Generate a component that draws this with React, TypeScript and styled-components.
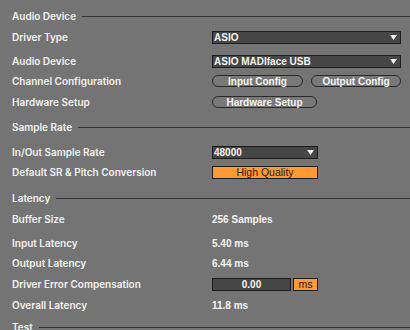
import React from "react";
import styled, { createGlobalStyle } from "styled-components";

const Global = createGlobalStyle`
  html, body { margin: 0; padding: 0; background: #747474; }
  body { width: 410px; height: 330px; overflow: hidden; }
`;

const Page = styled.div`
  padding: 6px 0 0 12px;
  font-family: Inter, "Noto Sans", sans-serif;
  font-weight: 600;
  font-size: 10px;
  color: #f2f2f2;
`;

const Header = styled.div<{ $mt: number }>`
  display: flex;
  align-items: center;
  gap: 6px;
  height: 20px;
  margin-top: ${(p) => p.$mt}px;
`;

const HeaderLine = styled.div`
  flex: 1;
  height: 1px;
  background: #353535;
`;

const Row = styled.div<{ $mt: number }>`
  display: grid;
  grid-template-columns: 200px 1fr;
  align-items: center;
  height: 20px;
  margin-top: ${(p) => p.$mt}px;
  padding-right: 9px;
`;

const Controls = styled.div`
  display: flex;
  align-items: center;
  gap: 8px;
`;

const fieldFont = `"Liberation Sans", Arial, sans-serif`;

const Select = styled.div<{ $w: number }>`
  box-sizing: border-box;
  width: ${(p) => p.$w}px;
  height: 13px;
  background: #464646;
  border: 1px solid #1c1c1c;
  display: flex;
  align-items: center;
  justify-content: space-between;
  padding: 0 3px 0 1px;
  font-family: ${fieldFont};
  font-weight: 700;
  font-size: 10px;
  color: #f4f4f4;
`;

const Arrow = () => (
  <svg width="7" height="5" viewBox="0 0 7 5">
    <path d="M0 0 H7 L3.5 5 Z" fill="#f4f4f4" />
  </svg>
);

const Pill = styled.div<{ $w: number }>`
  box-sizing: border-box;
  width: ${(p) => p.$w}px;
  height: 12px;
  border: 1px solid #2a2a2a;
  border-radius: 6px;
  background: #787878;
  display: flex;
  align-items: center;
  justify-content: center;
  font-family: ${fieldFont};
  font-weight: 700;
  font-size: 10px;
  color: #f4f4f4;
`;

const Orange = styled.div<{ $w: number }>`
  box-sizing: border-box;
  width: ${(p) => p.$w}px;
  height: 13px;
  background: #ff9a33;
  border: 1px solid #1c1c1c;
  display: flex;
  align-items: center;
  justify-content: center;
  font-family: ${fieldFont};
  font-weight: 400;
  font-size: 10.5px;
  color: #2a1a0a;
`;

const ValueBox = styled.div`
  box-sizing: border-box;
  width: 79px;
  height: 13px;
  background: #464646;
  border: 1px solid #1c1c1c;
  display: flex;
  align-items: center;
  justify-content: center;
  font-family: ${fieldFont};
  font-weight: 700;
  font-size: 10px;
  color: #f4f4f4;
`;

const Value = styled.span`
  font-family: ${fieldFont};
  font-weight: 700;
  font-size: 10px;
  color: #f4f4f4;
`;

const Tight = styled.div`
  display: flex;
  align-items: center;
  gap: 2px;
`;

export default function App() {
  return (
    <>
      <Global />
      <Page>
        <Header $mt={0}>
          Audio Device
          <HeaderLine />
        </Header>
        <Row $mt={1}>
          <span>Driver Type</span>
          <Select $w={189}>
            ASIO
            <Arrow />
          </Select>
        </Row>
        <Row $mt={4}>
          <span>Audio Device</span>
          <Select $w={189}>
            ASIO MADIface USB
            <Arrow />
          </Select>
        </Row>
        <Row $mt={0}>
          <span>Channel Configuration</span>
          <Controls>
            <Pill $w={91}>Input Config</Pill>
            <Pill $w={90}>Output Config</Pill>
          </Controls>
        </Row>
        <Row $mt={1}>
          <span>Hardware Setup</span>
          <Pill $w={105}>Hardware Setup</Pill>
        </Row>

        <Header $mt={5}>
          Sample Rate
          <HeaderLine />
        </Header>
        <Row $mt={5}>
          <span>In/Out Sample Rate</span>
          <Select $w={106}>
            48000
            <Arrow />
          </Select>
        </Row>
        <Row $mt={0}>
          <span>Default SR &amp; Pitch Conversion</span>
          <Orange $w={106}>High Quality</Orange>
        </Row>

        <Header $mt={6}>
          Latency
          <HeaderLine />
        </Header>
        <Row $mt={1}>
          <span>Buffer Size</span>
          <Value>256 Samples</Value>
        </Row>
        <Row $mt={4}>
          <span>Input Latency</span>
          <Value>5.40 ms</Value>
        </Row>
        <Row $mt={0}>
          <span>Output Latency</span>
          <Value>6.44 ms</Value>
        </Row>
        <Row $mt={1}>
          <span>Driver Error Compensation</span>
          <Tight>
            <ValueBox>0.00</ValueBox>
            <Orange $w={25}>ms</Orange>
          </Tight>
        </Row>
        <Row $mt={1}>
          <span>Overall Latency</span>
          <Value>11.8 ms</Value>
        </Row>
        <Header $mt={2}>
          Test
          <HeaderLine />
        </Header>
      </Page>
    </>
  );
}
